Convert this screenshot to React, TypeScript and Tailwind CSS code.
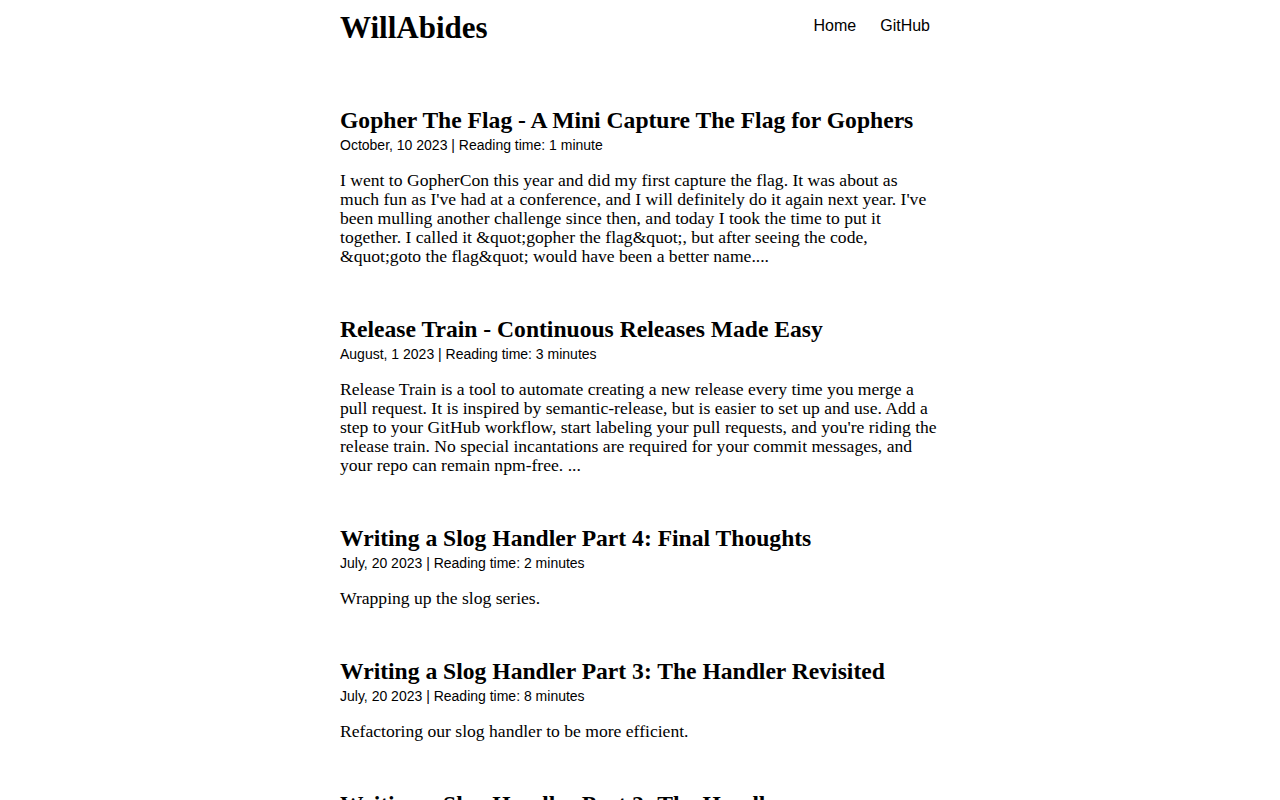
import React from "react";

const posts = [
  {
    title: "Gopher The Flag - A Mini Capture The Flag for Gophers",
    meta: "October, 10 2023 | Reading time: 1 minute",
    body: "I went to GopherCon this year and did my first capture the flag. It was about as much fun as I've had at a conference, and I will definitely do it again next year. I've been mulling another challenge since then, and today I took the time to put it together. I called it &quot;gopher the flag&quot;, but after seeing the code, &quot;goto the flag&quot; would have been a better name....",
  },
  {
    title: "Release Train - Continuous Releases Made Easy",
    meta: "August, 1 2023 | Reading time: 3 minutes",
    body: "Release Train is a tool to automate creating a new release every time you merge a pull request. It is inspired by semantic-release, but is easier to set up and use. Add a step to your GitHub workflow, start labeling your pull requests, and you're riding the release train. No special incantations are required for your commit messages, and your repo can remain npm-free. ...",
  },
  {
    title: "Writing a Slog Handler Part 4: Final Thoughts",
    meta: "July, 20 2023 | Reading time: 2 minutes",
    body: "Wrapping up the slog series.",
  },
  {
    title: "Writing a Slog Handler Part 3: The Handler Revisited",
    meta: "July, 20 2023 | Reading time: 8 minutes",
    body: "Refactoring our slog handler to be more efficient.",
  },
  {
    title: "Writing a Slog Handler Part 2: The Handler",
    meta: "July, 19 2023 | Reading time: 10 minutes",
    body: "Writing the handler.",
  },
];

export default function App() {
  return (
    <div className="min-h-screen bg-white text-black">
      <div className="mx-auto w-[600px]">
        <header className="flex items-start justify-between pt-[8px]">
          <a
            href="#"
            className="font-['Liberation_Serif',serif] text-[31px] leading-[40px] font-bold"
          >
            WillAbides
          </a>
          <nav className="flex gap-[24px] pr-[10px] pt-[6px] font-['Liberation_Sans',Arial,sans-serif] text-[16px] leading-[24px]">
            <a href="#">Home</a>
            <a href="#">GitHub</a>
          </nav>
        </header>
        <main className="mt-[59px] flex flex-col gap-[50px]">
          {posts.map((p) => (
            <article key={p.title}>
              <h2 className="font-['Liberation_Serif',serif] text-[23.6px] leading-[26px] font-bold">
                {p.title}
              </h2>
              <div className="font-['Liberation_Sans',Arial,sans-serif] text-[14px] leading-[24px]">
                {p.meta}
              </div>
              <p className="mt-[14px] font-['Liberation_Serif',serif] text-[17.6px] leading-[19px]">
                {p.body}
              </p>
            </article>
          ))}
        </main>
      </div>
    </div>
  );
}
